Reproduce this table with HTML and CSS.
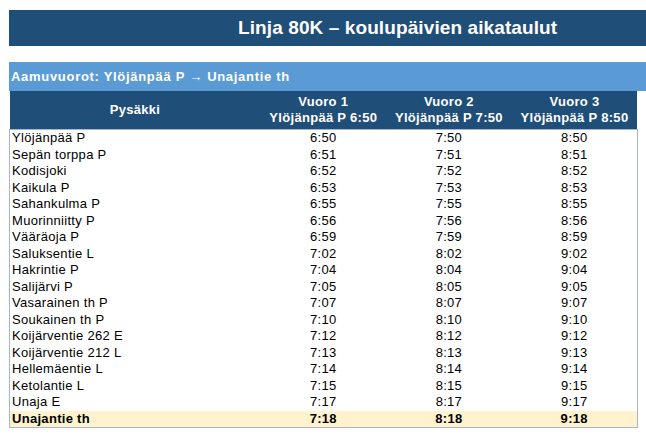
FILE: index.html
```html
<!DOCTYPE html>
<html lang="fi">
<head>
<meta charset="utf-8">
<title>Linja 80K – koulupäivien aikataulut</title>
<link rel="stylesheet" href="styles.css">
</head>
<body>
<header class="title-bar"><h1 class="title">Linja 80K – koulupäivien aikataulut</h1></header>
<h2 class="section-bar">Aamuvuorot: Ylöjänpää P → Unajantie th</h2>
<table class="timetable">
<thead>
<tr>
<th class="col-stop">Pysäkki</th>
<th class="col-trip">Vuoro 1<br>Ylöjänpää P 6:50</th>
<th class="col-trip">Vuoro 2<br>Ylöjänpää P 7:50</th>
<th class="col-trip">Vuoro 3<br>Ylöjänpää P 8:50</th>
</tr>
</thead>
<tbody>
<tr><td>Ylöjänpää P</td><td>6:50</td><td>7:50</td><td>8:50</td></tr>
<tr><td>Sepän torppa P</td><td>6:51</td><td>7:51</td><td>8:51</td></tr>
<tr><td>Kodisjoki</td><td>6:52</td><td>7:52</td><td>8:52</td></tr>
<tr><td>Kaikula P</td><td>6:53</td><td>7:53</td><td>8:53</td></tr>
<tr><td>Sahankulma P</td><td>6:55</td><td>7:55</td><td>8:55</td></tr>
<tr><td>Muorinniitty P</td><td>6:56</td><td>7:56</td><td>8:56</td></tr>
<tr><td>Vääräoja P</td><td>6:59</td><td>7:59</td><td>8:59</td></tr>
<tr><td>Saluksentie L</td><td>7:02</td><td>8:02</td><td>9:02</td></tr>
<tr><td>Hakrintie P</td><td>7:04</td><td>8:04</td><td>9:04</td></tr>
<tr><td>Salijärvi P</td><td>7:05</td><td>8:05</td><td>9:05</td></tr>
<tr><td>Vasarainen th P</td><td>7:07</td><td>8:07</td><td>9:07</td></tr>
<tr><td>Soukainen th P</td><td>7:10</td><td>8:10</td><td>9:10</td></tr>
<tr><td>Koijärventie 262 E</td><td>7:12</td><td>8:12</td><td>9:12</td></tr>
<tr><td>Koijärventie 212 L</td><td>7:13</td><td>8:13</td><td>9:13</td></tr>
<tr><td>Hellemäentie L</td><td>7:14</td><td>8:14</td><td>9:14</td></tr>
<tr><td>Ketolantie L</td><td>7:15</td><td>8:15</td><td>9:15</td></tr>
<tr><td>Unaja E</td><td>7:17</td><td>8:17</td><td>9:17</td></tr>
<tr class="final"><td>Unajantie th</td><td>7:18</td><td>8:18</td><td>9:18</td></tr>
</tbody>
</table>
</body>
</html>
```
FILE: styles.css
```css
html, body {
  margin: 0;
  padding: 0;
  overflow: hidden;
  background: #ffffff;
}
body {
  padding: 10px 0 0 9px;
  font-family: "Liberation Sans", Arial, sans-serif;
  color: #000000;
}
.title-bar {
  background: #1f4e79;
  height: 36px;
  display: flex;
  align-items: center;
  padding-left: 229px;
}
.title {
  margin: 0;
  color: #ffffff;
  font-size: 19px;
  font-weight: bold;
  letter-spacing: 0.1px;
  white-space: nowrap;
}
.section-bar {
  margin: 16px 0 0 0;
  background: #5b9bd5;
  color: #ffffff;
  height: 29px;
  line-height: 29px;
  font-size: 13px;
  font-weight: bold;
  padding-left: 2px;
  letter-spacing: 0.7px;
  white-space: nowrap;
}
.timetable {
  width: 628px;
  border-collapse: collapse;
  font-size: 13px;
  letter-spacing: 0.3px;
  table-layout: fixed;
}
.timetable thead th {
  background: #1f4e79;
  color: #ffffff;
  font-weight: bold;
  height: 38px;
  padding: 0;
  line-height: 16px;
  text-align: center;
  vertical-align: middle;
}
.col-stop { width: 251px; }
.col-trip { width: 125.6px; }
.timetable tbody {
  border: 1px solid #a3b8cc;
}
.timetable tbody td {
  padding: 0;
  height: 16.5px;
  line-height: 16.5px;
  text-align: center;
  white-space: nowrap;
}
.timetable tbody td:first-child {
  text-align: left;
  padding-left: 2px;
}
.timetable tr.final td {
  background: #fff2cc;
  font-weight: bold;
}
```
